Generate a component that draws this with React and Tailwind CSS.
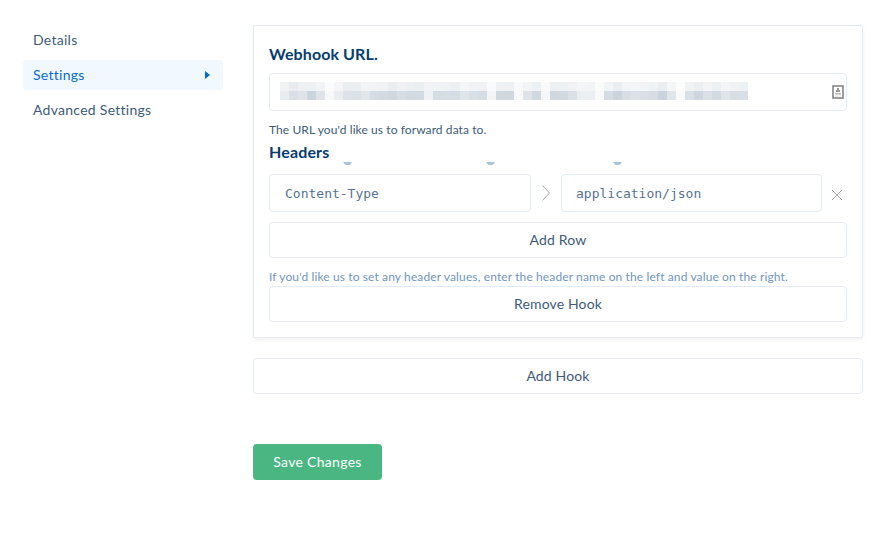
const top = [
  '#f0f2f4', '#eaedf0', '#edf1f3', '#eef1f4', '#f2f3f5', '#fafbfc', '#f4f5f7', '#eaeef1', '#ebeff2', '#f2f4f6', '#f1f3f4', '#f0f2f4', '#eaeef0',
  '#eff1f4', '#edf0f2', '#eaeef0', '#f2f3f5', '#f0f3f5', '#eff1f4', '#edf0f3', '#f5f6f7', '#f1f3f5', '#f0f2f5', '#f9fafb', '#eff2f4', '#eef1f3',
  '#f8f9fa', '#f3f4f6', '#eef2f4', '#fafafb', '#edf0f3', '#eef1f3', '#f0f2f4', '#f3f5f6', '#f2f4f5', '#fafbfb', '#f1f4f6', '#eaeef1', '#f2f4f5',
  '#f4f5f6', '#f1f3f4', '#eff2f4', '#ebeef1', '#f4f5f6', '#fcfcfc', '#f0f2f4', '#ebeff1', '#f1f3f5', '#edf0f3', '#f3f5f6', '#f0f2f4', '#eef1f4',
]
const bottom = [
  '#e8ecef', '#d8dfe6', '#e0e4e9', '#ccd5dd', '#dee3e9', '#f6f8f9', '#eaeef1', '#dde3e9', '#dce1e7', '#e2e6eb', '#d5dce3', '#d3dae1', '#cfd8df',
  '#d6dde4', '#d3dbe2', '#d3dae3', '#eff2f4', '#d5dce4', '#d7dde4', '#d5dce4', '#dfe5ea', '#d9dfe6', '#d5dde5', '#f2f4f6', '#cfd7df', '#cfd7df',
  '#f6f8fa', '#dfe3e9', '#d0d8e0', '#f5f6f8', '#cfd7df', '#d1d8e0', '#dbe1e7', '#eceff2', '#eceff2', '#f7f9fa', '#d4dbe3', '#cbd4dd', '#d8dee4',
  '#dce2e7', '#d9dfe4', '#d7dde3', '#cbd4dd', '#e0e5ea', '#f8f9fa', '#d9dfe7', '#cdd6de', '#dae0e6', '#d3dae2', '#e0e5ea', '#d7dee6', '#d8dfe7',
]

function MosaicRow({ colors }) {
  return (
    <div className="flex">
      {colors.map((c, i) => (
        <div key={i} className="size-[9px]" style={{ backgroundColor: c }} />
      ))}
    </div>
  )
}

function OutlineButton({ children }) {
  return (
    <button className="flex h-9 w-full items-center justify-center rounded border border-[#e1ecf7] bg-white pb-[2px] text-[14px] tracking-[0.15px] text-[#3c5b78]">
      {children}
    </button>
  )
}

function Cap() {
  return (
    <svg className="block h-[3px] w-[9px]" viewBox="0 0 9 3">
      <path d="M0 0h9L7.3 2.2Q6.8 3 6 3H3Q2.2 3 1.7 2.2Z" fill="#a9c3d9" />
    </svg>
  )
}

export default function App() {
  return (
    <div className="flex h-[537px] w-[883px] bg-white pl-[23px] pt-[25px] font-['Lato',sans-serif] font-normal text-[#3c5b78]">
      <nav className="mr-[30px] flex w-[200px] flex-col gap-[5px] text-[14px] tracking-[0.27px]">
        <a className="flex h-[30px] items-center px-2.5 pb-[2px]">Details</a>
        <a className="flex h-[30px] items-center justify-between rounded bg-[#f1f8ff] pl-2.5 pr-[13px] text-[#056bd0]">
          <span className="pb-[2px]">Settings</span>
          <svg width="5" height="8" viewBox="0 0 5 8">
            <path d="M0 0l5 4-5 4z" fill="currentColor" />
          </svg>
        </a>
        <a className="flex h-[30px] items-center px-2.5 pb-[2px]">Advanced Settings</a>
      </nav>
      <main className="w-[610px]">
        <section className="h-[313px] rounded-[2px] border border-[#e1ecf7] px-[15px] pt-[17px] shadow-[0_2px_4px_rgba(0,0,0,0.05)]">
          <h2 className="h-[30px] text-[16px] leading-[22px] font-bold tracking-[0.1px] text-[#053c70]">Webhook URL.</h2>
          <div className="flex h-[38px] items-center justify-between rounded border border-[#e1ecf7] pl-2.5 pr-[2px]">
            <div className="pb-[2px]">
              <MosaicRow colors={top} />
              <MosaicRow colors={bottom} />
            </div>
            <svg width="12" height="14" viewBox="0 0 12 14">
              <rect x="1" y="1" width="10" height="12" fill="#fff" stroke="#858585" strokeWidth="1.6" />
              <path d="M5 3h2v2h1v2H4V5h1z" fill="#999" />
              <path d="M3 8h6v1.5H3z" fill="#b8b8b8" />
              <path d="M3 10.5h6v1H3z" fill="#ddd" />
            </svg>
          </div>
          <p className="mt-[11px] h-4 text-[12px] leading-4 tracking-[0.09px]">The URL you'd like us to forward data to.</p>
          <h2 className="mt-[3px] h-[22px] text-[16px] leading-[22px] font-bold tracking-[0.15px] text-[#053c70]">Headers</h2>
          <div className="-mt-px flex h-[12px] pl-[74px]">
            <Cap />
            <div className="w-[134px]" />
            <Cap />
            <div className="w-[118px]" />
            <Cap />
          </div>
          <div className="flex h-[38px] items-center font-['DejaVu_Sans_Mono',monospace] text-[13px] text-[#567491]">
            <div className="flex h-[38px] w-[262px] items-center rounded border border-[#e1ecf7] pl-[15px] pt-px">Content-Type</div>
            <svg className="mx-[11px]" width="8" height="16" viewBox="0 0 8 16">
              <path d="M.5.5L7.5 8l-7 7.5" fill="none" stroke="#a8a8a8" strokeWidth="1" />
            </svg>
            <div className="flex h-[38px] w-[261px] items-center rounded border border-[#e1ecf7] pl-[14px] pt-px">application/json</div>
            <svg className="ml-[10px] mt-[3px]" width="10" height="10" viewBox="0 0 10 10">
              <path d="M0 0l10 10M10 0L0 10" stroke="#aaa" strokeWidth="1" />
            </svg>
          </div>
          <div className="mt-[10px]"><OutlineButton>Add Row</OutlineButton></div>
          <p className="mt-[11px] h-[17px] whitespace-nowrap text-[12px] leading-4 tracking-[0.12px] text-[#7196bb]">
            If you'd like us to set any header values, enter the header name on the left and value on the right.
          </p>
          <OutlineButton>Remove Hook</OutlineButton>
        </section>
        <div className="mt-5"><OutlineButton>Add Hook</OutlineButton></div>
        <button className="mt-[50px] h-9 w-[129px] rounded bg-[#4ab783] pb-[2px] text-[14px] tracking-[0.3px] text-white">Save Changes</button>
      </main>
    </div>
  )
}
